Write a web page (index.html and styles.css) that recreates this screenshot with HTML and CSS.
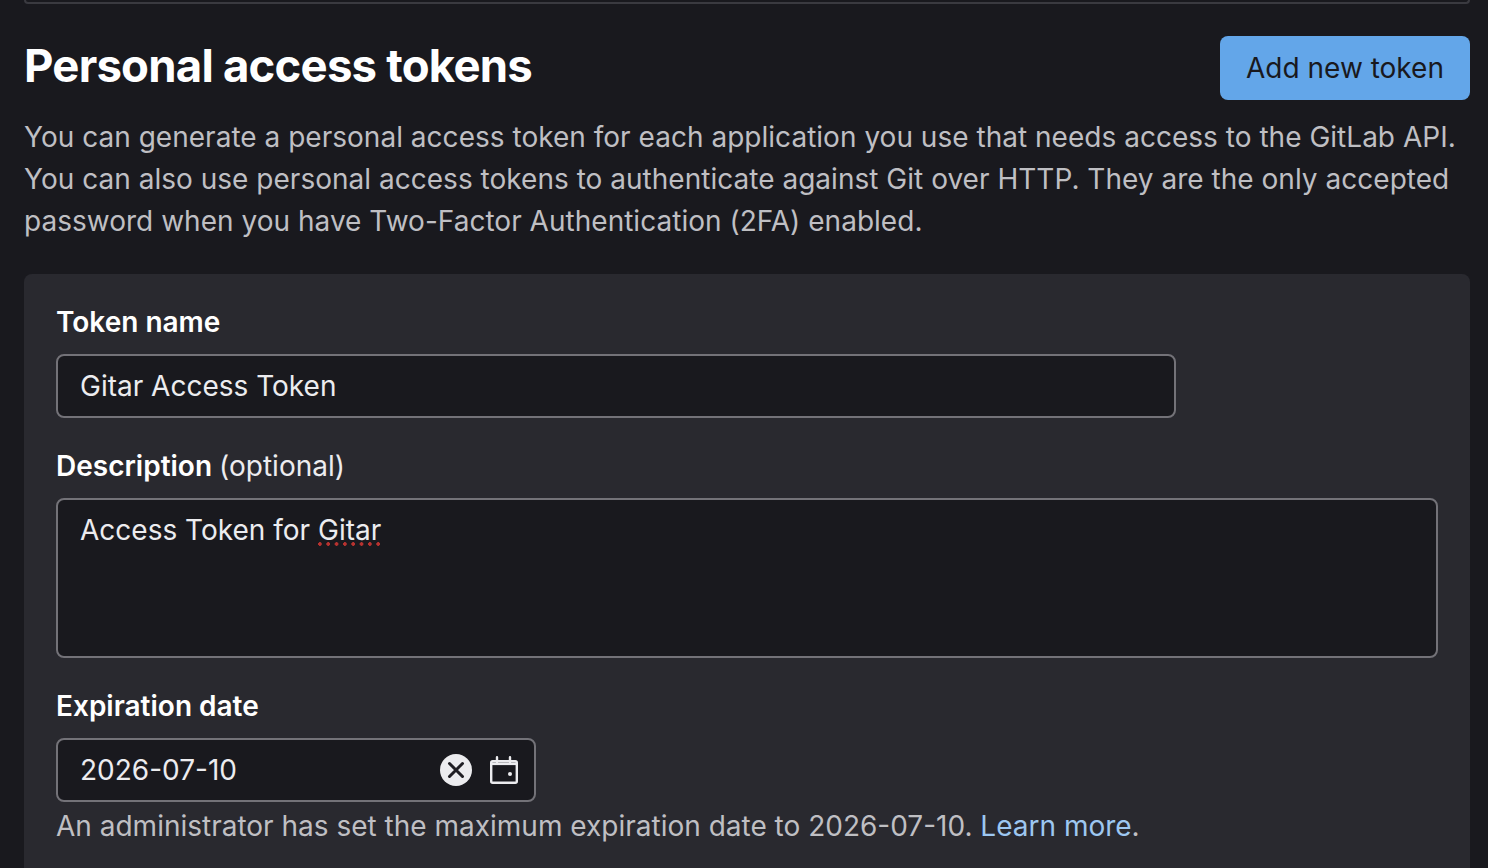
FILE: index.html
```html
<!DOCTYPE html>
<html lang="en">
<head>
<meta charset="utf-8">
<title>Personal access tokens</title>
<link rel="stylesheet" href="styles.css">
</head>
<body>
<div class="page">
  <div class="prev-card"></div>
  <header class="head">
    <h1 class="title">Personal access tokens</h1>
    <button class="btn-primary">Add new token</button>
  </header>
  <p class="intro">You can generate a personal access token for each application you use that needs access to the GitLab API. You can also use personal access tokens to authenticate against Git over HTTP. They are the only accepted password when you have Two-Factor Authentication (2FA) enabled.</p>
  <form class="card">
    <div class="field">
      <label class="label">Token name</label>
      <div class="input input-name">Gitar Access Token</div>
    </div>
    <div class="field">
      <label class="label">Description <span class="opt">(optional)</span></label>
      <div class="input input-area">Access Token for <span class="misspelt">Gitar</span></div>
    </div>
    <div class="field">
      <label class="label">Expiration date</label>
      <div class="input input-date">
        <span class="date-value">2026-07-10</span>
        <svg class="icon-clear" width="32" height="32" viewBox="0 0 32 32" aria-hidden="true">
          <circle cx="16" cy="16" r="16" fill="#ececef"/>
          <path d="M9.5 9.5 22.5 22.5M22.5 9.5 9.5 22.5" stroke="#1f1e24" stroke-width="3" stroke-linecap="round" fill="none"/>
        </svg>
        <svg class="icon-cal" width="28" height="28" viewBox="0 0 28 28" aria-hidden="true">
          <path d="M7 1.2V6M20 1.2V6" stroke="#ececef" stroke-width="2.4" stroke-linecap="round" fill="none"/>
          <rect x="1.2" y="5.2" width="25.6" height="21.6" rx="1.5" stroke="#ececef" stroke-width="2.4" fill="none"/>
          <path d="M1.2 7.8H26.8" stroke="#ececef" stroke-width="2.6" fill="none"/>
          <circle cx="20" cy="18" r="2" fill="#ececef"/>
        </svg>
      </div>
      <p class="help">An administrator has set the maximum expiration date to 2026-07-10. <a class="link" href="#">Learn more</a>.</p>
    </div>
  </form>
</div>
</body>
</html>
```
FILE: styles.css
```css
* { box-sizing: border-box; }
html, body { margin: 0; height: 868px; overflow: hidden; background: #19191e; }
body { font-family: Inter, "Noto Sans", sans-serif; color: #ececef; font-size: 28px; }
.page { padding: 0 18px 0 24px; }
.prev-card { height: 4px; border: 2px solid #3a3a40; border-top: 0; border-radius: 0 0 8px 8px; }
.head { display: flex; justify-content: space-between; align-items: flex-start; margin-top: 32px; }
.title { margin: 0; font-size: 45.5px; line-height: 60px; font-weight: 700; letter-spacing: -0.78px; color: #fff; }
.btn-primary { height: 64px; width: 250px; padding: 0; border: 0; border-radius: 8px; background: #63a6e9; color: #19191e; font: 400 28px Inter, sans-serif; }
.intro { margin: 16px 0 0; font-size: 28px; line-height: 42px; color: #bfbfc3; letter-spacing: 0.02px; }
.card { margin-top: 32px; padding: 32px; height: 640px; background: #29292f; border-radius: 8px 8px 0 0; }
.field { margin-bottom: 32px; }
.label { display: block; font-weight: 600; line-height: 32px; margin-bottom: 16px; color: #fff; }
.opt { font-weight: 400; color: #ececef; }
.input { background: #19191e; border: 2px solid #737278; border-radius: 8px; padding: 0 22px; color: #ececef; line-height: 60px; }
.input-name { width: 1120px; height: 64px; }
.input-area { height: 160px; }
.misspelt { background: radial-gradient(circle at 2px 2px, #b8322f 1.6px, transparent 2px) 0 calc(100% - 1px) / 8.33px 4px repeat-x; }
.input-date { width: 480px; height: 64px; display: flex; align-items: center; padding-right: 14px; }
.date-value { flex: 1; }
.icon-clear { margin-right: 18px; }
.icon-cal { margin-right: 2px; }
.help { margin: 3px 0 0; line-height: 42px; color: #bfbfc3; }
.link { color: #9dc7f1; text-decoration: none; }
```
